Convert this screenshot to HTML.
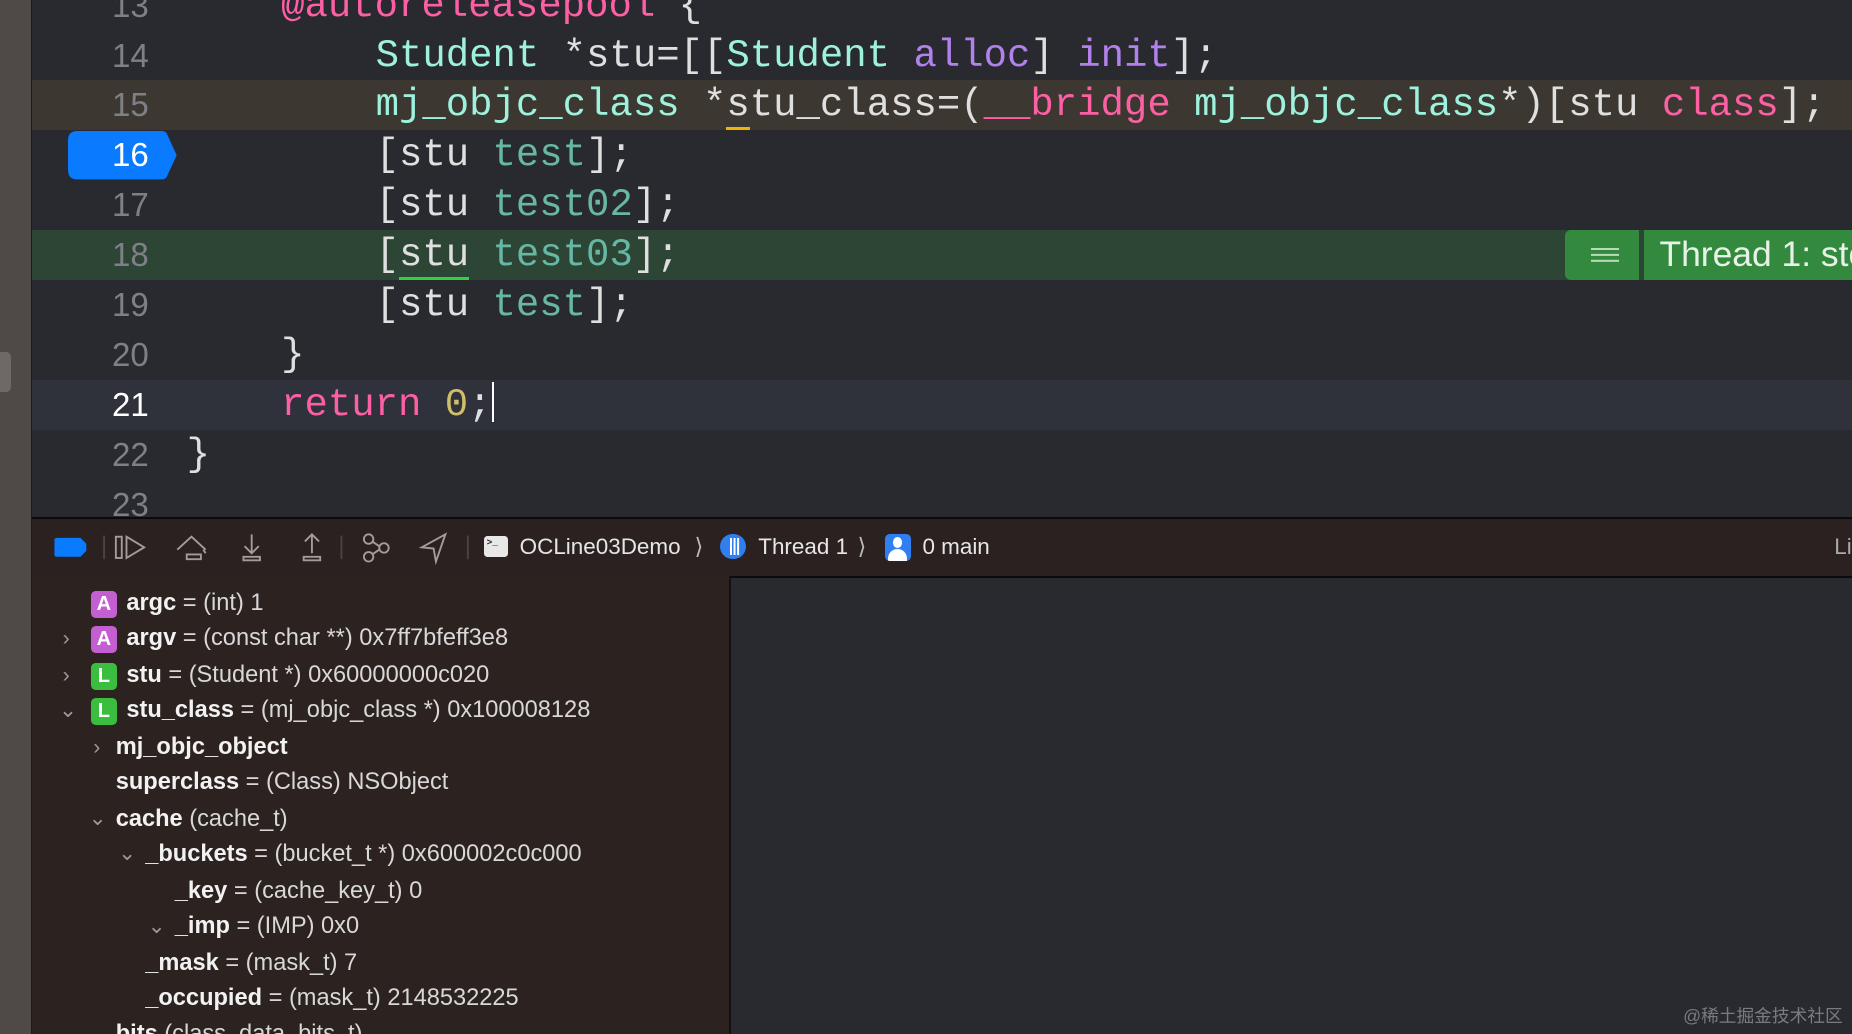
<!DOCTYPE html>
<html><head><meta charset="utf-8"><style>
html,body{margin:0;padding:0;background:#292a30;overflow:hidden;width:1852px;height:1034px}
#w{zoom:1.18112;position:relative;width:1568px;height:876px;overflow:hidden;background:#292a30}
.abs{position:absolute}
#strip{left:0;top:0;width:26px;height:876px;background:#4f4948;border-right:1px solid #1a1a1a}
.row{position:absolute;left:27px;right:0;height:42px}
.ln{position:absolute;width:99px;left:0;text-align:right;font:28px "Liberation Sans",sans-serif;color:#7f8086;line-height:44px}
.code{position:absolute;left:0;font:33px "Liberation Mono",monospace;color:#dfdfe0;line-height:44px;white-space:pre}
.ty{color:#9ef1dd}.me{color:#67b7a4}.kw{color:#fc5fa3}.pu{color:#b281eb}.nu{color:#d0bf69}
#tb{left:27px;top:438px;right:0;height:48px;background:#2a2120;border-top:2px solid #0b0b0b;border-bottom:2px solid #0b0b0b}
.tt{position:absolute;top:0;font:19px "Liberation Sans",sans-serif;line-height:48px;color:#e6e6e6;white-space:nowrap}
#vars{left:27px;top:488px;width:590px;height:388px;background:#2c2220;border-right:2px solid #121212}
.v{position:absolute;font:20px "Liberation Sans",sans-serif;color:#d8d8d8;white-space:pre;line-height:30px}
.v b{color:#f2f2f2}
.bd{position:absolute;width:22px;height:23px;border-radius:4px;color:#fff;font:bold 17px "Liberation Sans",sans-serif;text-align:center;line-height:23px}
.ch{position:absolute;color:#9a9a9a;font:18px "Liberation Sans",sans-serif;line-height:30px}
</style></head><body><div id="w">
<div class="abs" id="strip"></div>
<div class="abs" style="left:0;top:298px;width:9px;height:34px;background:#6e6866;border-radius:0 4px 4px 0"></div>

<div class="row" style="top:-16px"><div class="ln" style="left:0">13</div><div class="code" style="left:211px"><span class="kw">@autoreleasepool</span> {</div></div>
<div class="row" style="top:26px"><div class="ln">14</div><div class="code" style="left:291px"><span class="ty">Student</span> *stu=[[<span class="ty">Student</span> <span class="pu">alloc</span>] <span class="pu">init</span>];</div></div>
<div class="row" style="top:68px;background:#3c3831"><div class="ln">15</div><div class="code" style="left:291px"><span class="ty">mj_objc_class</span> *<span style="border-bottom:3px solid #f0b400">s</span>tu_class=(<span class="kw">__bridge</span> <span class="ty">mj_objc_class</span>*)[stu <span class="kw">class</span>];</div></div>
<div class="row" style="top:110px">
<svg class="abs" style="left:31px;top:1px" width="94" height="41"><path d="M8 0H79Q83 0 84 3L92 20.5L84 38Q83 41 79 41H8Q0 41 0 33V8Q0 0 8 0Z" fill="#0a7aff"/></svg>
<div class="ln" style="color:#fff">16</div><div class="code" style="left:291px">[stu <span class="me">test</span>];</div></div>
<div class="row" style="top:152px"><div class="ln">17</div><div class="code" style="left:291px">[stu <span class="me">test02</span>];</div></div>
<div class="row" style="top:195px;background:#2d4535"><div class="ln">18</div><div class="code" style="left:291px">[<span style="border-bottom:3px solid #2fd33f">stu</span> <span class="me">test03</span>];</div>
<div class="abs" style="left:1298px;top:0;width:63px;height:42px;background:#338a3e;border-radius:5px 0 0 5px"><div class="abs" style="left:22px;top:15px;width:24px;height:2px;background:#b8dcb8;box-shadow:0 5px 0 #b8dcb8,0 10px 0 #b8dcb8"></div></div>
<div class="abs" style="left:1365px;top:0;width:200px;height:42px;background:#338a3e;font:30px 'Liberation Sans',sans-serif;color:#e8f3e8;line-height:42px;padding-left:13px;white-space:nowrap;overflow:hidden">Thread 1: stopped</div></div>
<div class="row" style="top:237px"><div class="ln">19</div><div class="code" style="left:291px">[stu <span class="me">test</span>];</div></div>
<div class="row" style="top:279px"><div class="ln">20</div><div class="code" style="left:211px">}</div></div>
<div class="row" style="top:322px;background:#2f323a"><div class="ln" style="color:#fff">21</div><div class="code" style="left:211px"><span class="kw">return</span> <span class="nu">0</span>;<span style="display:inline-block;width:2px;height:34px;background:#fff;vertical-align:-6px"></span></div></div>
<div class="row" style="top:364px"><div class="ln">22</div><div class="code" style="left:131px">}</div></div>
<div class="row" style="top:406px"><div class="ln">23</div></div>

<div class="abs" id="tb">
<svg class="abs" style="left:0;top:0" width="400" height="48" fill="none" stroke="#a29c9a" stroke-width="1.6">
<path d="M21 16H41L46 21V27L41 32H21Q19 32 19 30V18Q19 16 21 16Z" fill="#0a7aff" stroke="none"/>
<path d="M61 14V34" stroke="#4a4342"/>
<rect x="71" y="15" width="5" height="18"/><path d="M80 15L95 24L80 33Z"/>
<path d="M123 26L135 15L147 26M131 30H143V34H131Z"/><path d="M145 26L147 29"/>
<path d="M186 13V29M180 23L186 29L192 23M179 32H193V35H179Z"/>
<path d="M237 29V13M231 19L237 13L243 19M230 32H244V35H230Z"/>
<path d="M262 14V34" stroke="#4a4342"/>
<circle cx="285" cy="17" r="4"/><circle cx="285" cy="32" r="4"/><circle cx="298" cy="24.5" r="4"/><path d="M288 19L294 23M288 30L294 26"/>
<path d="M350 13L330 24L340 25L342 36Z"/>
<path d="M369 14V34" stroke="#4a4342"/>
</svg>
<div class="abs" style="left:383px;top:14px;width:20px;height:18px;background:#e8e8e8;border-radius:3px;font:bold 8px 'Liberation Mono',monospace;color:#222;line-height:12px;padding-left:2px;box-sizing:border-box">&gt;_</div>
<div class="tt" style="left:413px">OCLine03Demo</div>
<div class="tt" style="left:561px;color:#bbb">⟩</div>
<div class="abs" style="left:583px;top:12px;width:22px;height:22px;border-radius:50%;background:#2f7ff0"><div class="abs" style="left:8px;top:4px;width:1.5px;height:14px;background:#fff;box-shadow:3px 0 0 #fff,6px 0 0 #fff"></div></div>
<div class="tt" style="left:615px">Thread 1</div>
<div class="tt" style="left:699px;color:#bbb">⟩</div>
<div class="abs" style="left:722px;top:12px;width:22px;height:23px;border-radius:4px;background:#2f7ff0;overflow:hidden"><div class="abs" style="left:7px;top:3px;width:8px;height:9px;border-radius:50%;background:#fff"></div><div class="abs" style="left:3px;top:13px;width:16px;height:14px;border-radius:8px 8px 0 0;background:#fff"></div></div>
<div class="tt" style="left:754px">0 main</div>
<div class="tt" style="left:1526px;color:#aaa">Li</div>
</div>

<div class="abs" id="vars">
<div class="bd" style="left:50px;top:12px;background:#c35fd0">A</div><div class="v" style="left:80px;top:8px"><b>argc</b> = (int) 1</div>
<div class="ch" style="left:26px;top:38px">›</div><div class="bd" style="left:50px;top:42px;background:#c35fd0">A</div><div class="v" style="left:80px;top:38px"><b>argv</b> = (const char **) 0x7ff7bfeff3e8</div>
<div class="ch" style="left:26px;top:69px">›</div><div class="bd" style="left:50px;top:73px;background:#3bbd3f">L</div><div class="v" style="left:80px;top:69px"><b>stu</b> = (Student *) 0x60000000c020</div>
<div class="ch" style="left:23px;top:99px">⌄</div><div class="bd" style="left:50px;top:103px;background:#3bbd3f">L</div><div class="v" style="left:80px;top:99px"><b>stu_class</b> = (mj_objc_class *) 0x100008128</div>
<div class="ch" style="left:52px;top:130px">›</div><div class="v" style="left:71px;top:130px"><b>mj_objc_object</b></div>
<div class="v" style="left:71px;top:160px"><b>superclass</b> = (Class) NSObject</div>
<div class="ch" style="left:48px;top:190px">⌄</div><div class="v" style="left:71px;top:191px"><b>cache</b> (cache_t)</div>
<div class="ch" style="left:73px;top:220px">⌄</div><div class="v" style="left:96px;top:221px"><b>_buckets</b> = (bucket_t *) 0x600002c0c000</div>
<div class="v" style="left:121px;top:252px"><b>_key</b> = (cache_key_t) 0</div>
<div class="ch" style="left:98px;top:282px">⌄</div><div class="v" style="left:121px;top:282px"><b>_imp</b> = (IMP) 0x0</div>
<div class="v" style="left:96px;top:313px"><b>_mask</b> = (mask_t) 7</div>
<div class="v" style="left:96px;top:343px"><b>_occupied</b> = (mask_t) 2148532225</div>
<div class="ch" style="left:48px;top:372px">⌄</div><div class="v" style="left:71px;top:373px"><b>bits</b> (class_data_bits_t)</div>
</div>
<div class="abs" style="left:1425px;top:848px;font:15px 'Liberation Sans','Noto Sans CJK SC',sans-serif;color:#7a7b80;white-space:nowrap">@稀土掘金技术社区</div>
</div></body></html>
